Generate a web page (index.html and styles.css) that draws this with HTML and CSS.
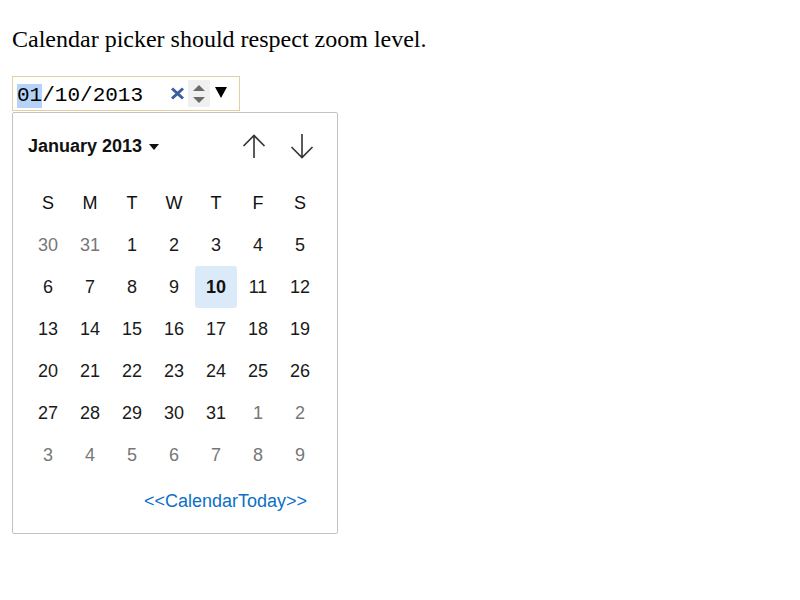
FILE: index.html
```html
<!DOCTYPE html>
<html>
<head>
<meta charset="utf-8">
<link rel="stylesheet" href="styles.css">
</head>
<body>
<p class="title">Calendar picker should respect zoom level.</p>
<div class="picker">
  <div class="field">
    <span class="seg sel">01</span><span class="seg">/</span><span class="seg">10</span><span class="seg">/</span><span class="seg">2013</span>
    <span class="fill"></span>
    <svg class="clear" width="15" height="13" viewBox="0 0 15 13"><path d="M2 1.5 L13 11.5 M13 1.5 L2 11.5" stroke="#3a5f9f" stroke-width="3" fill="none"/></svg>
    <span class="spin">
      <svg width="12" height="6" viewBox="0 0 12 6"><path d="M6 0 L12 6 L0 6 Z" fill="#6b6b6b"/></svg>
      <svg width="12" height="6" viewBox="0 0 12 6"><path d="M0 0 L12 0 L6 6 Z" fill="#6b6b6b"/></svg>
    </span>
    <svg class="drop" width="12" height="11" viewBox="0 0 12 11"><path d="M0 0 L12 0 L6 11 Z" fill="#000"/></svg>
  </div>
  <div class="popup">
    <div class="head">
      <span class="month">January 2013</span>
      <svg class="mtri" width="10" height="6" viewBox="0 0 10 6"><path d="M0 0 L10 0 L5 6 Z" fill="#111"/></svg>
      <span class="fill"></span>
      <span class="nav"><svg width="24" height="25" viewBox="0 0 24 25"><path d="M12 1.5 L12 24 M1.5 12 L12 1.5 L22.5 12" stroke="#333" stroke-width="1.6" fill="none"/></svg></span>
      <span class="nav"><svg width="24" height="25" viewBox="0 0 24 25"><path d="M12 0 L12 23.5 M1.5 13 L12 23.5 L22.5 13" stroke="#333" stroke-width="1.6" fill="none"/></svg></span>
    </div>
    <div class="grid">
      <span class="wd">S</span><span class="wd">M</span><span class="wd">T</span><span class="wd">W</span><span class="wd">T</span><span class="wd">F</span><span class="wd">S</span>
      <span class="d o">30</span><span class="d o">31</span><span class="d">1</span><span class="d">2</span><span class="d">3</span><span class="d">4</span><span class="d">5</span>
      <span class="d">6</span><span class="d">7</span><span class="d">8</span><span class="d">9</span><span class="d cur">10</span><span class="d">11</span><span class="d">12</span>
      <span class="d">13</span><span class="d">14</span><span class="d">15</span><span class="d">16</span><span class="d">17</span><span class="d">18</span><span class="d">19</span>
      <span class="d">20</span><span class="d">21</span><span class="d">22</span><span class="d">23</span><span class="d">24</span><span class="d">25</span><span class="d">26</span>
      <span class="d">27</span><span class="d">28</span><span class="d">29</span><span class="d">30</span><span class="d">31</span><span class="d o">1</span><span class="d o">2</span>
      <span class="d o">3</span><span class="d o">4</span><span class="d o">5</span><span class="d o">6</span><span class="d o">7</span><span class="d o">8</span><span class="d o">9</span>
    </div>
    <div class="foot"><span class="today">&lt;&lt;CalendarToday&gt;&gt;</span></div>
  </div>
</div>
</body>
</html>
```
FILE: styles.css
```css
html, body { background: #fff; }
body {
  margin: 0 12px 12px 12px;
  padding: 0;
  font-family: "Liberation Serif", serif;
}
.title {
  margin: 0;
  padding: 26px 0 23px 0;
  font-size: 24px;
  line-height: 27px;
  color: #000;
}
.picker {
  display: flex;
  flex-direction: column;
  align-items: flex-start;
}
.field {
  box-sizing: border-box;
  width: 228px;
  height: 35px;
  border: 1px solid #e4cf9f;
  display: flex;
  align-items: center;
  padding: 0 12px 0 4px;
  font-family: "Liberation Mono", monospace;
  font-size: 21px;
  color: #000;
}
.seg { line-height: 24px; margin-top: 4px; }
.sel { background: #b5d3f9; }
.fill { flex: 1; }
.clear { margin-right: 3px; }
.spin {
  width: 22px;
  height: 27px;
  background: #f0f0f0;
  display: flex;
  flex-direction: column;
  align-items: center;
  justify-content: center;
  gap: 6px;
  margin-right: 5px;
}
.drop { margin-top: -3px; }
.popup {
  box-sizing: border-box;
  width: 326px;
  height: 422px;
  margin-top: 1px;
  border: 1px solid #c3c3c3;
  border-radius: 2px;
  background: #fff;
  font-family: "Liberation Sans", Arial, sans-serif;
  display: flex;
  flex-direction: column;
}
.head {
  box-sizing: border-box;
  height: 69px;
  display: flex;
  align-items: center;
  padding: 0 19px 2px 15px;
}
.month {
  font-weight: bold;
  font-size: 18px;
  color: #111;
}
.mtri { margin-left: 7px; margin-top: 1px; }
.nav {
  width: 32px;
  height: 32px;
  display: flex;
  align-items: center;
  justify-content: center;
}
.nav + .nav { margin-left: 16px; }
.grid {
  display: grid;
  grid-template-columns: repeat(7, 42px);
  grid-auto-rows: 42px;
  padding-left: 14px;
  font-size: 18px;
}
.wd, .d {
  display: flex;
  align-items: center;
  justify-content: center;
  color: #1a1a1a;
}
.wd { color: #111; }
.d.o { color: #777; }
.d.cur {
  background: #dbeaf8;
  border-radius: 3px;
  font-weight: bold;
  color: #111;
}
.foot {
  flex: 1;
  display: flex;
  align-items: center;
  justify-content: flex-end;
  padding: 0 30px 6px 0;
}
.today {
  font-size: 18px;
  color: #0b6fc8;
}
```
